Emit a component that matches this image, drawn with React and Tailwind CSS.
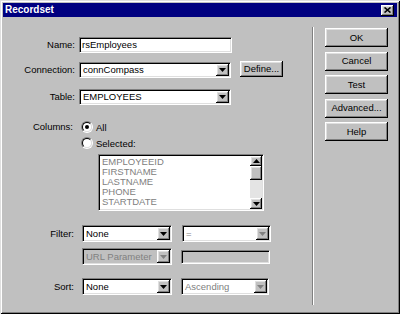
import React from 'react';

const raised =
  'bg-[#c0c0c0] shadow-[inset_-1px_-1px_0_#000,inset_1px_1px_0_#fff,inset_-2px_-2px_0_#808080,inset_2px_2px_0_#dfdfdf]';
const sunken =
  'border border-t-[#808080] border-l-[#808080] border-r-white border-b-white shadow-[inset_1px_1px_0_#000,inset_-1px_-1px_0_#dfdfdf]';

function Arrow({ up = false, disabled = false }) {
  return (
    <svg width="7" height="4" viewBox="0 0 7 4" className={up ? 'rotate-180' : ''}>
      <polygon points="0,0 7,0 3.5,4" fill={disabled ? '#808080' : '#000'} />
    </svg>
  );
}

function Select({ value, className = '', disabled = false, grayBg = false }) {
  return (
    <div className={`${sunken} ${grayBg ? 'bg-[#c0c0c0]' : 'bg-white'} flex items-stretch p-[1px] ${className}`}>
      <div className={`flex-1 flex items-center pl-[2px] truncate ${disabled ? 'text-[#808080]' : 'text-black'}`}>
        {value}
      </div>
      <div className={`${raised} w-[13px] flex items-center justify-center`}>
        <Arrow disabled={disabled} />
      </div>
    </div>
  );
}

function Radio({ checked }) {
  return (
    <div className="w-[12px] h-[12px] rounded-full border border-t-[#808080] border-l-[#808080] border-r-white border-b-white">
      <div className="w-full h-full rounded-full bg-white border border-t-black border-l-black border-r-[#dfdfdf] border-b-[#dfdfdf] flex items-center justify-center">
        {checked && <div className="w-[4px] h-[4px] rounded-full bg-black" />}
      </div>
    </div>
  );
}

function Button({ children, className = '' }) {
  return (
    <div className={`${raised} flex items-center justify-center text-black ${className}`}>{children}</div>
  );
}

const columns = ['EMPLOYEEID', 'FIRSTNAME', 'LASTNAME', 'PHONE', 'STARTDATE'];

export default function App() {
  return (
    <div className="w-[400px] h-[314px] flex flex-col p-[3px] bg-[#c0c0c0] shadow-[inset_1px_1px_0_#dfdfdf,inset_-1px_-1px_0_#000,inset_2px_2px_0_#fff,inset_-2px_-2px_0_#808080] font-['Liberation_Sans',Arial,sans-serif] text-[9.5px] leading-none select-none">
      {/* title bar */}
      <div className="h-[14px] bg-[#000080] flex items-center justify-between pl-[2px] pr-[3px]">
        <span className="text-white font-bold text-[10px]">Recordset</span>
        <div className={`${raised} w-[13px] h-[11px] flex items-center justify-center`}>
          <svg width="7" height="6" viewBox="0 0 7 6">
            <path d="M0.5 0.5 L6.5 5.5 M6.5 0.5 L0.5 5.5" stroke="#000" strokeWidth="1.6" />
          </svg>
        </div>
      </div>

      <div className="flex flex-1">
        {/* form */}
        <div className="w-[309px] flex flex-col">
          <div className="mt-[20px] h-[16px] flex items-center">
            <span className="w-[72px] text-right">Name:</span>
            <div className={`${sunken} bg-white ml-[4px] w-[153px] h-full flex items-center pl-[2px]`}>rsEmployees</div>
          </div>

          <div className="mt-[9px] h-[16px] flex items-center">
            <span className="w-[72px] text-right">Connection:</span>
            <Select value="connCompass" className="ml-[4px] w-[152px] h-full" />
            <Button className="ml-[9px] w-[43px] h-[16px] -mt-[2px]">Define...</Button>
          </div>

          <div className="mt-[11px] h-[16px] flex items-center">
            <span className="w-[72px] text-right">Table:</span>
            <Select value="EMPLOYEES" className="ml-[4px] w-[152px] h-full" />
          </div>

          <div className="mt-[15px] h-[13px] flex items-center">
            <span className="w-[70px] text-right">Columns:</span>
            <div className="ml-[8px]">
              <Radio checked />
            </div>
            <span className="ml-[3px] mt-[2px]">All</span>
          </div>
          <div className="mt-[3px] h-[13px] flex items-center pl-[78px]">
            <Radio />
            <span className="ml-[3px] mt-[2px]">Selected:</span>
          </div>

          <div className={`${sunken} bg-white mt-[5px] ml-[95px] w-[166px] h-[57px] flex p-[1px]`}>
            <div className="flex-1 flex flex-col pl-[2px] pt-[1px] text-[#808080] text-[9.5px]">
              {columns.map((c) => (
                <div key={c} className="h-[10px] leading-[10px]">
                  {c}
                </div>
              ))}
            </div>
            <div className="w-[12px] flex flex-col">
              <div className={`${raised} h-[10px] flex items-center justify-center`}>
                <Arrow up />
              </div>
              <div className={`${raised} h-[14px]`} />
              <div className="flex-1 bg-[#e4e4e4]" />
              <div className={`${raised} h-[11px] flex items-center justify-center`}>
                <Arrow />
              </div>
            </div>
          </div>

          <div className="mt-[14px] h-[17px] flex items-center">
            <span className="w-[71px] text-right">Filter:</span>
            <Select value="None" className="ml-[8px] w-[90px] h-full" />
            <Select value="=" disabled className="ml-[10px] w-[89px] h-full" />
          </div>

          <div className="mt-[6px] h-[17px] flex items-center pl-[79px]">
            <Select value="URL Parameter" disabled grayBg className="w-[90px] h-full" />
            <div className={`${sunken} bg-[#c0c0c0] ml-[9px] w-[89px] h-[14px]`} />
          </div>

          <div className="mt-[13px] h-[17px] flex items-center">
            <span className="w-[71px] text-right">Sort:</span>
            <Select value="None" className="ml-[8px] w-[90px] h-full" />
            <Select value="Ascending" disabled className="ml-[9px] w-[88px] h-full" />
          </div>
        </div>

        {/* separator */}
        <div className="w-[2px] mt-[10px] mb-[6px] border-l border-l-[#808080] border-r border-r-white" />

        {/* buttons */}
        <div className="pl-[11px] pt-[11px] flex flex-col gap-[4.5px]">
          <Button className="w-[63px] h-[19px]">OK</Button>
          <Button className="w-[63px] h-[19px]">Cancel</Button>
          <Button className="w-[63px] h-[19px]">Test</Button>
          <Button className="w-[63px] h-[19px]">Advanced...</Button>
          <Button className="w-[63px] h-[19px]">Help</Button>
        </div>
      </div>
    </div>
  );
}
